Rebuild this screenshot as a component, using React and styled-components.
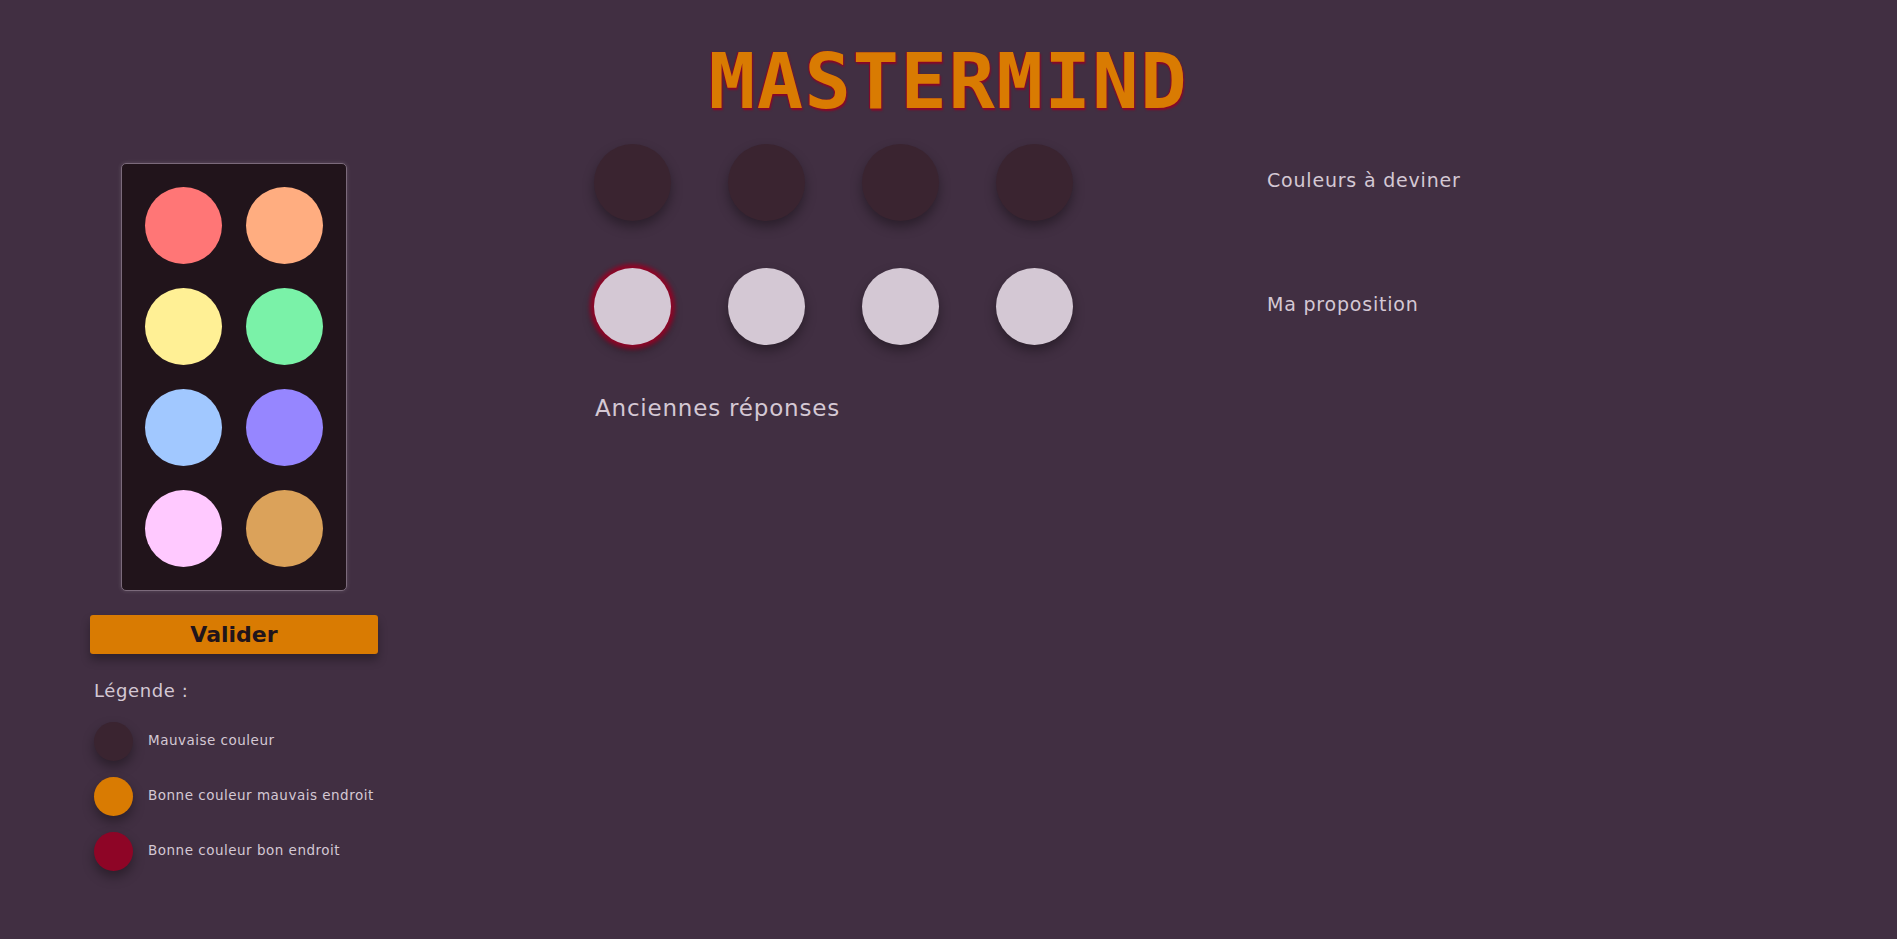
import React from 'react';
import styled, { createGlobalStyle } from 'styled-components';

const GlobalStyle = createGlobalStyle`
  html, body {
    margin: 0;
    padding: 0;
    background: #412f42;
    font-family: "DejaVu Sans", "Noto Sans", sans-serif;
    color: #d4c8d4;
  }
`;

const Page = styled.div`
  min-height: 939px;
  background: #412f42;
  padding-top: 44px;
  box-sizing: border-box;
`;

const Title = styled.h1`
  margin: 0;
  text-align: center;
  font-family: "DejaVu Sans Mono", "Liberation Mono", monospace;
  font-weight: bold;
  font-size: 77px;
  line-height: 76px;
  letter-spacing: 1.6px;
  color: #d97b02;
  text-shadow: 1px 2px 2px #8e0526, -1px 0 1px #8e0526;
`;

const Main = styled.div`
  display: flex;
  align-items: flex-start;
  margin-top: 24px;
  padding-left: 90px;
`;

const LeftColumn = styled.div`
  width: 288px;
  display: flex;
  flex-direction: column;
  align-items: center;
  padding-top: 19px;
`;

const Palette = styled.div`
  display: grid;
  grid-template-columns: repeat(2, 77px);
  gap: 24px;
  padding: 23px;
  background: #21141b;
  border: 1px solid #7b6a7b;
  border-radius: 5px;
  box-shadow: 0 0 4px rgba(255, 255, 255, 0.15);
`;

const Peg = styled.div`
  width: ${p => p.$size || 77}px;
  height: ${p => p.$size || 77}px;
  border-radius: 50%;
  background: ${p => p.$color};
  flex-shrink: 0;
  box-shadow: ${p => p.$selected
    ? '0 0 4px 4px #8e0526, 0 6px 12px rgba(0, 0, 0, 0.35)'
    : p.$flat ? 'none' : '0 6px 12px rgba(0, 0, 0, 0.35)'};
`;

const ValidateButton = styled.button`
  margin-top: 24px;
  width: 288px;
  height: 39px;
  border: none;
  border-radius: 3px;
  background: #d97b02;
  color: #21141b;
  font-family: "DejaVu Sans", sans-serif;
  font-weight: bold;
  font-size: 22px;
  box-shadow: 0 6px 10px rgba(0, 0, 0, 0.3);
  cursor: pointer;
`;

const Legend = styled.div`
  align-self: stretch;
  margin-top: 26px;
  padding-left: 4px;
`;

const LegendTitle = styled.div`
  font-size: 18px;
  letter-spacing: 0.6px;
  margin-bottom: 21px;
`;

const LegendList = styled.div`
  display: flex;
  flex-direction: column;
  gap: 16px;
`;

const LegendRow = styled.div`
  display: flex;
  align-items: center;
  gap: 15px;
`;

const LegendText = styled.span`
  font-size: 13.5px;
  letter-spacing: 0.5px;
  margin-top: -4px;
`;

const Board = styled.div`
  margin-left: 216px;
  width: 480px;
`;

const PegRow = styled.div`
  display: flex;
  gap: 57px;
  margin-bottom: ${p => p.$last ? 0 : 47}px;
`;

const SectionTitle = styled.h2`
  margin: 50px 0 0 1px;
  font-size: 23px;
  letter-spacing: 0.8px;
  font-weight: normal;
`;

const Labels = styled.div`
  margin-left: 193px;
  display: flex;
  flex-direction: column;
`;

const RowLabel = styled.div`
  height: 77px;
  display: flex;
  align-items: center;
  font-size: 19px;
  letter-spacing: 0.8px;
  margin-top: -3px;
  margin-bottom: 50px;
`;

const paletteColors = [
  '#ff7676', '#ffad80',
  '#fff095', '#7af2a8',
  '#a1c8ff', '#9686ff',
  '#ffc9ff', '#dba25a',
];

const legend = [
  { color: '#3a2430', text: 'Mauvaise couleur' },
  { color: '#d97b02', text: 'Bonne couleur mauvais endroit' },
  { color: '#8e0526', text: 'Bonne couleur bon endroit' },
];

export default function App() {
  return (
    <Page>
      <GlobalStyle />
      <Title>MASTERMIND</Title>
      <Main>
        <LeftColumn>
          <Palette>
            {paletteColors.map(c => <Peg key={c} $color={c} $flat />)}
          </Palette>
          <ValidateButton>Valider</ValidateButton>
          <Legend>
            <LegendTitle>Légende :</LegendTitle>
            <LegendList>
              {legend.map(item => (
                <LegendRow key={item.text}>
                  <Peg $size={39} $color={item.color} />
                  <LegendText>{item.text}</LegendText>
                </LegendRow>
              ))}
            </LegendList>
          </Legend>
        </LeftColumn>

        <Board>
          <PegRow>
            {[0, 1, 2, 3].map(i => <Peg key={i} $color="#3a2430" />)}
          </PegRow>
          <PegRow $last>
            {[0, 1, 2, 3].map(i => <Peg key={i} $color="#d4c8d4" $selected={i === 0} />)}
          </PegRow>
          <SectionTitle>Anciennes réponses</SectionTitle>
        </Board>

        <Labels>
          <RowLabel>Couleurs à deviner</RowLabel>
          <RowLabel>Ma proposition</RowLabel>
        </Labels>
      </Main>
    </Page>
  );
}
